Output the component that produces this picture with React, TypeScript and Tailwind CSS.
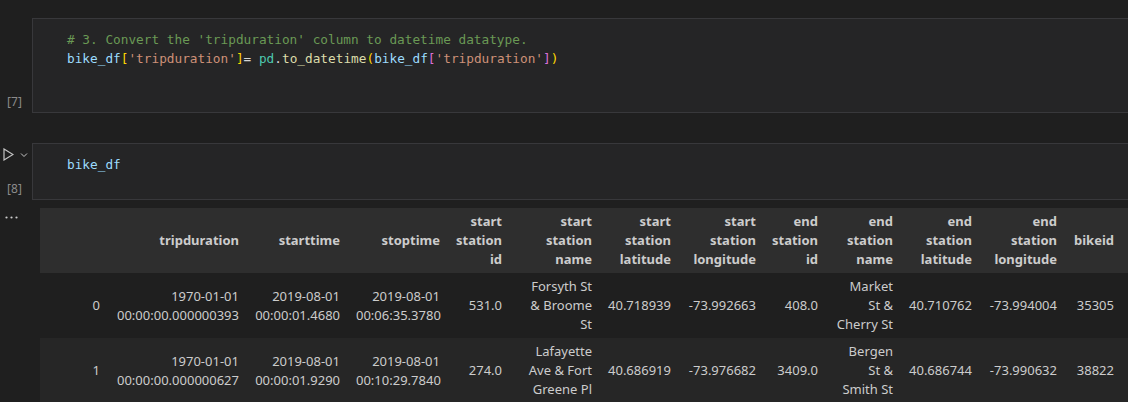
import React from 'react';

type Tok = { t: string; c: string };

const COMMENT: Tok[] = [{ t: "# 3. Convert the 'tripduration' column to datetime datatype.", c: 'text-[#6a9955]' }];

const LINE2: Tok[] = [
  { t: 'bike_df', c: 'text-[#9cdcfe]' },
  { t: '[', c: 'text-[#ffd700]' },
  { t: "'tripduration'", c: 'text-[#ce9178]' },
  { t: ']', c: 'text-[#ffd700]' },
  { t: '= ', c: 'text-[#d4d4d4]' },
  { t: 'pd', c: 'text-[#4ec9b0]' },
  { t: '.', c: 'text-[#d4d4d4]' },
  { t: 'to_datetime', c: 'text-[#dcdcaa]' },
  { t: '(', c: 'text-[#ffd700]' },
  { t: 'bike_df', c: 'text-[#9cdcfe]' },
  { t: '[', c: 'text-[#da70d6]' },
  { t: "'tripduration'", c: 'text-[#ce9178]' },
  { t: ']', c: 'text-[#da70d6]' },
  { t: ')', c: 'text-[#ffd700]' },
];

// last column is an empty filler so the striped rows run off the right edge
const COL_WIDTHS = [68, 139, 101, 100, 62, 90, 79, 85, 62, 75, 79, 85, 57, 60];

const HEADERS: string[][] = [
  [],
  ['tripduration'],
  ['starttime'],
  ['stoptime'],
  ['start', 'station', 'id'],
  ['start', 'station', 'name'],
  ['start', 'station', 'latitude'],
  ['start', 'station', 'longitude'],
  ['end', 'station', 'id'],
  ['end', 'station', 'name'],
  ['end', 'station', 'latitude'],
  ['end', 'station', 'longitude'],
  ['bikeid'],
  [],
];

const ROWS: string[][][] = [
  [
    ['0'],
    ['1970-01-01', '00:00:00.000000393'],
    ['2019-08-01', '00:00:01.4680'],
    ['2019-08-01', '00:06:35.3780'],
    ['531.0'],
    ['Forsyth St', '& Broome', 'St'],
    ['40.718939'],
    ['-73.992663'],
    ['408.0'],
    ['Market', 'St &', 'Cherry St'],
    ['40.710762'],
    ['-73.994004'],
    ['35305'],
    [],
  ],
  [
    ['1'],
    ['1970-01-01', '00:00:00.000000627'],
    ['2019-08-01', '00:00:01.9290'],
    ['2019-08-01', '00:10:29.7840'],
    ['274.0'],
    ['Lafayette', 'Ave & Fort', 'Greene Pl'],
    ['40.686919'],
    ['-73.976682'],
    ['3409.0'],
    ['Bergen', 'St &', 'Smith St'],
    ['40.686744'],
    ['-73.990632'],
    ['38822'],
    [],
  ],
];

function CodeLine({ toks }: { toks: Tok[] }) {
  return (
    <div className="h-[19px] leading-[19px] whitespace-pre">
      {toks.map((k, i) => (
        <span key={i} className={k.c}>
          {k.t}
        </span>
      ))}
    </div>
  );
}

function ExecCount({ n }: { n: number }) {
  return (
    <span className="text-[12px] leading-[16px] text-[#8b8b8b] font-['Noto_Sans',sans-serif]">[{n}]</span>
  );
}

function Lines({ lines }: { lines: string[] }) {
  return (
    <>
      {lines.map((l, i) => (
        <div key={i} className="whitespace-nowrap">
          {l}
        </div>
      ))}
    </>
  );
}

export default function App() {
  return (
    <div className="w-[1128px] h-[402px] overflow-hidden bg-[#1f1f1f] text-[#cccccc] font-['Noto_Sans',sans-serif]">
      {/* cell [7] */}
      <div className="flex pt-[18px]">
        <div className="w-[32px] shrink-0 flex flex-col justify-end items-center pb-[3px] pr-[3px]">
          <ExecCount n={7} />
        </div>
        <div className="flex-1 h-[95px] border border-r-0 border-[#38383b] bg-[#252526] pt-[11px] pl-[34px] font-['DejaVu_Sans_Mono',monospace] text-[12.75px]">
          <CodeLine toks={COMMENT} />
          <CodeLine toks={LINE2} />
        </div>
      </div>

      {/* cell [8] */}
      <div className="flex mt-[30px]">
        <div className="w-[32px] shrink-0 flex flex-col justify-between pb-[3px]">
          <div className="flex items-center pt-[5px] pl-[3px] gap-[6px]">
            <svg width="11" height="13" viewBox="0 0 11 13" fill="none" stroke="#c5c5c5" strokeWidth="1.2">
              <path d="M1 1 L10 6.5 L1 12 Z" strokeLinejoin="miter" />
            </svg>
            <svg width="8" height="6" viewBox="0 0 8 6" fill="none" stroke="#c5c5c5" strokeWidth="1">
              <path d="M1 1.5 L4 4.5 L7 1.5" />
            </svg>
          </div>
          <div className="flex justify-center pr-[3px]">
            <ExecCount n={8} />
          </div>
        </div>
        <div className="flex-1 h-[57px] border border-r-0 border-[#38383b] bg-[#252526] pt-[11px] pl-[34px] font-['DejaVu_Sans_Mono',monospace] text-[12.75px]">
          <CodeLine toks={[{ t: 'bike_df', c: 'text-[#9cdcfe]' }]} />
        </div>
      </div>

      {/* output */}
      <div className="flex mt-[8px]">
        <div className="w-[40px] shrink-0 pt-[8px] pl-[5px]">
          <svg width="13" height="3" viewBox="0 0 13 3" fill="#cccccc">
            <circle cx="1.5" cy="1.5" r="1.1" />
            <circle cx="6.5" cy="1.5" r="1.1" />
            <circle cx="11.5" cy="1.5" r="1.1" />
          </svg>
        </div>
        <div className="flex-1 overflow-hidden">
          <table className="table-fixed border-collapse text-[13px] leading-[19px]" style={{ width: COL_WIDTHS.reduce((a, b) => a + b, 0) }}>
            <colgroup>
              {COL_WIDTHS.map((w, i) => (
                <col key={i} style={{ width: w }} />
              ))}
            </colgroup>
            <thead>
              <tr className="h-[65px] bg-[#2e2e2e]">
                {HEADERS.map((h, i) => (
                  <th key={i} className="px-2 py-1 text-right align-middle font-bold text-[#cccccc]">
                    <Lines lines={h} />
                  </th>
                ))}
              </tr>
            </thead>
            <tbody>
              {ROWS.map((r, ri) => (
                <tr key={ri} className={ri % 2 === 0 ? 'h-[65px] bg-[#1f1f1f]' : 'h-[65px] bg-[#262626]'}>
                  {r.map((c, ci) => (
                    <td key={ci} className="px-2 py-1 text-right align-middle">
                      <Lines lines={c} />
                    </td>
                  ))}
                </tr>
              ))}
            </tbody>
          </table>
        </div>
      </div>
    </div>
  );
}
